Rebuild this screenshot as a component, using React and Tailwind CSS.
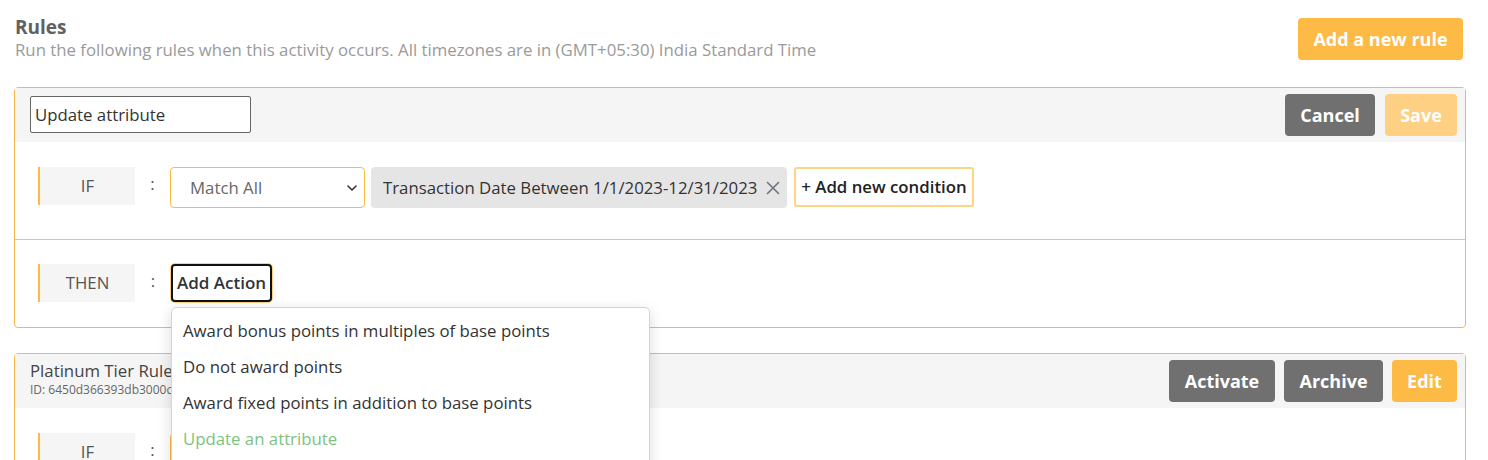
import { useState } from "react";

const ACTIONS = [
  "Award bonus points in multiples of base points",
  "Do not award points",
  "Award fixed points in addition to base points",
  "Update an attribute",
];

const Label = ({ text }) => (
  <div className="w-[97px] h-[38px] flex items-center justify-center bg-[#f5f5f5] border-l-2 border-[#fdb940] text-[16.8px] text-[#555]">
    {text}
  </div>
);

const Colon = () => <span className="w-[35px] text-center text-[16.8px] text-[#555] -mt-1">:</span>;

const MatchSelect = () => (
  <div className="w-[195px] h-[41px] flex items-center justify-between pl-[19px] pr-[4px] border border-[#fdb940] rounded-[4px] bg-white text-[16.8px] text-[#666]">
    <span className="mt-[1px]">Match All</span>
    <svg width="16" height="16" viewBox="0 0 16 16" fill="none" stroke="#333" strokeWidth="1.6" strokeLinecap="round" strokeLinejoin="round">
      <path d="M4 6l4 4 4-4" />
    </svg>
  </div>
);

const Btn = ({ children, className }) => (
  <button className={"h-[42px] rounded-[4px] text-white font-bold text-[18px] " + className}>{children}</button>
);

export default function App() {
  const [name] = useState("Update attribute");

  return (
    <div className="w-[1488px] h-[460px] overflow-hidden bg-white" style={{ fontFamily: "'Open Sans', 'Liberation Sans', sans-serif" }}>
      {/* Header */}
      <div className="flex items-start justify-between pl-[15px] pr-[25px] pt-[18px]">
        <div>
          <h1 className="text-[19px] font-bold text-[#616161] leading-[19px]">Rules</h1>
          <p className="text-[16.8px] text-[#9a9a9a] mt-[2px] leading-[22px]">
            Run the following rules when this activity occurs. All timezones are in (GMT+05:30) India Standard Time
          </p>
        </div>
        <Btn className="w-[165px] bg-[#fdba45]">Add a new rule</Btn>
      </div>

      {/* Editing rule */}
      <div className="relative ml-[14px] mr-[22px] mt-[26px] border border-[#f7b84a] rounded-[4px]">
        <div className="h-[54px] flex items-center justify-between bg-[#f5f5f5] pl-[15px] pr-[8px]">
          <input
            readOnly
            value={name}
            className="w-[221px] h-[37px] -mt-[2px] px-[4px] border border-[#666] rounded-[2px] bg-white text-[16.8px] text-[#333] outline-none"
          />
          <div className="flex gap-[10px]">
            <Btn className="w-[90px] bg-[#707070]">Cancel</Btn>
            <Btn className="w-[72px] bg-[#fdd083]">Save</Btn>
          </div>
        </div>

        <div className="pl-[23px] pt-[25px] pb-[31px] border-b border-[#f9c05e]">
          <div className="flex items-start">
            <Label text="IF" />
            <div className="h-[38px] flex items-center"><Colon /></div>
            <MatchSelect />
            <div className="ml-[6px] w-[416px] h-[41px] flex items-center justify-between pl-[12px] pr-[6px] bg-[#e5e5e5] rounded-[4px] text-[16.8px] text-[#333]">
              <span>Transaction Date Between 1/1/2023-12/31/2023</span>
              <svg width="16" height="16" viewBox="0 0 16 16" fill="none" stroke="#6b7280" strokeWidth="1.6" strokeLinecap="round">
                <path d="M2.5 2.5l11 11M13.5 2.5l-11 11" />
              </svg>
            </div>
            <button className="ml-[7px] w-[180px] h-[40px] border-2 border-[#fdd384] rounded-[3px] bg-white text-[16.8px] font-semibold text-[#222]">
              + Add new condition
            </button>
          </div>
        </div>

        <div className="pl-[23px] pt-[24px] pb-[25px]">
          <div className="flex items-center">
            <Label text="THEN" />
            <span className="w-[36px] text-center text-[16.8px] text-[#555] -mt-1">:</span>
            <button className="w-[101px] h-[38px] rounded-[4px] border-2 border-[#111] bg-white text-[17px] font-semibold text-[#333] ring-1 ring-[#fdd083]">
              Add Action
            </button>
          </div>
        </div>

        {/* Action dropdown */}
        <div className="absolute z-10 left-[156px] top-[219px] w-[479px] pt-[5px] pb-[20px] bg-white border border-[#d4d4d4] rounded-[5px] shadow-[0_4px_14px_rgba(0,0,0,0.15)]">
          {ACTIONS.map((a, i) => (
            <div
              key={a}
              className={"h-[36px] flex items-center pl-[11px] text-[16.8px] " + (i === ACTIONS.length - 1 ? "text-[#7cc382]" : "text-[#333]")}
            >
              {a}
            </div>
          ))}
        </div>
      </div>

      {/* Existing rule */}
      <div className="ml-[14px] mr-[22px] mt-[25px] border border-[#f7b84a] rounded-[4px]">
        <div className="h-[54px] flex items-center justify-between bg-[#f5f5f5] pl-[15px] pr-[8px]">
          <div className="-mt-[4px]">
            <p className="text-[16.8px] text-[#444] leading-[22px]">Platinum Tier Rule</p>
            <p className="text-[12px] text-[#666] leading-[16px]">ID: 6450d366393db3000c4f91a2</p>
          </div>
          <div className="flex gap-[9px]">
            <Btn className="w-[106px] h-[41px] bg-[#707070]">Activate</Btn>
            <Btn className="w-[99px] h-[41px] bg-[#707070]">Archive</Btn>
            <Btn className="w-[65px] h-[41px] bg-[#fdba45]">Edit</Btn>
          </div>
        </div>
        <div className="pl-[23px] pt-[25px] pb-[31px]">
          <div className="flex items-start">
            <Label text="IF" />
            <div className="h-[38px] flex items-center"><Colon /></div>
            <MatchSelect />
          </div>
        </div>
      </div>
    </div>
  );
}
